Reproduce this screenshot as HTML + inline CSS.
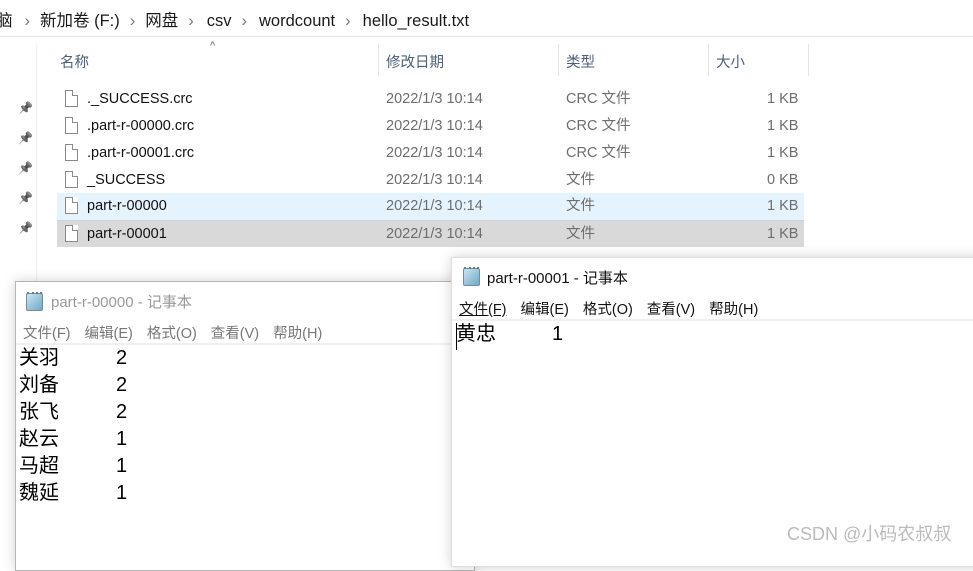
<!DOCTYPE html>
<html><head><meta charset="utf-8"><style>
*{margin:0;padding:0;box-sizing:border-box}
body{width:973px;height:550px;overflow:hidden;background:#fff;position:relative;font-family:"Liberation Sans","Noto Sans CJK SC",sans-serif;}
.a{position:absolute;white-space:nowrap}
.fi{position:absolute;width:13px;height:17px;border:1px solid #8a8a8a;background:#fff}
.fi:after{content:"";position:absolute;right:-1px;top:-1px;width:5px;height:5px;background:#fff;border-left:1px solid #8a8a8a;border-bottom:1px solid #8a8a8a}
.row{position:absolute;left:57px;width:747px;height:27px;font-size:14.5px;color:#111}
.row span{position:absolute;top:5px;line-height:17px;height:17px}
.g{color:#6d6d6d}
.pin{position:absolute;left:18px;width:10px;height:10px;color:#7a8590;font-size:12px;filter:grayscale(1)}
.np{position:absolute;background:#fff;border:1px solid #b5b5b5;box-shadow:0 0 12px rgba(0,0,0,.18)}
.ico{position:absolute;width:17px;height:18px;background:linear-gradient(135deg,#c8e6f2,#6fa9c4);border:1px solid #6a8ea2;border-radius:2px}
.ico:before{content:"";position:absolute;left:0;right:0;top:-2px;height:3px;border-top:2px dotted #777}
.menu span{margin-right:14px}
.txt{font-size:20px;color:#000;line-height:27px}
.s{color:#777;margin:0 10px}
</style></head><body>
<div class="a" style="left:-4px;top:7px;font-size:16.5px;color:#1a1a1a">脑<span class="s" style="margin-left:12px">›</span>新加卷 (F:)<span class="s">›</span>网盘<span class="s" style="margin-right:13px">›</span>csv<span class="s" style="margin-right:12px">›</span>wordcount<span class="s" style="margin-right:12px">›</span>hello_result.txt</div>
<div class="a" style="left:0;top:36px;width:973px;height:1px;background:#e5e5e5"></div>
<div class="a" style="left:36px;top:44px;width:1px;height:240px;background:#f0f0f0"></div>
<div class="a" style="left:210px;top:40px;font-size:11px;color:#666">^</div>
<div class="a" style="left:60px;top:51px;font-size:14.5px;color:#4c607a">名称</div>
<div class="a" style="left:378px;top:44px;width:1px;height:32px;background:#e5e5e5"></div>
<div class="a" style="left:386px;top:51px;font-size:14.5px;color:#4c607a">修改日期</div>
<div class="a" style="left:558px;top:44px;width:1px;height:32px;background:#e5e5e5"></div>
<div class="a" style="left:566px;top:51px;font-size:14.5px;color:#4c607a">类型</div>
<div class="a" style="left:708px;top:44px;width:1px;height:32px;background:#e5e5e5"></div>
<div class="a" style="left:716px;top:51px;font-size:14.5px;color:#4c607a">大小</div>
<div class="a" style="left:808px;top:44px;width:1px;height:32px;background:#e5e5e5"></div>
<div class="pin" style="top:101px">📌</div>
<div class="pin" style="top:131px">📌</div>
<div class="pin" style="top:161px">📌</div>
<div class="pin" style="top:191px">📌</div>
<div class="pin" style="top:221px">📌</div>
<div class="row" style="top:86px"><div class="fi" style="left:8px;top:4px"></div><span style="left:30px">._SUCCESS.crc</span><span class="g" style="left:329px">2022/1/3 10:14</span><span class="g" style="left:509px">CRC 文件</span><span class="g" style="left:710px">1 KB</span></div>
<div class="row" style="top:113px"><div class="fi" style="left:8px;top:4px"></div><span style="left:30px">.part-r-00000.crc</span><span class="g" style="left:329px">2022/1/3 10:14</span><span class="g" style="left:509px">CRC 文件</span><span class="g" style="left:710px">1 KB</span></div>
<div class="row" style="top:140px"><div class="fi" style="left:8px;top:4px"></div><span style="left:30px">.part-r-00001.crc</span><span class="g" style="left:329px">2022/1/3 10:14</span><span class="g" style="left:509px">CRC 文件</span><span class="g" style="left:710px">1 KB</span></div>
<div class="row" style="top:167px"><div class="fi" style="left:8px;top:4px"></div><span style="left:30px">_SUCCESS</span><span class="g" style="left:329px">2022/1/3 10:14</span><span class="g" style="left:509px">文件</span><span class="g" style="left:710px">0 KB</span></div>
<div class="row" style="top:193px;background:#e5f3ff"><div class="fi" style="left:8px;top:4px"></div><span style="left:30px">part-r-00000</span><span class="g" style="left:329px">2022/1/3 10:14</span><span class="g" style="left:509px">文件</span><span class="g" style="left:710px">1 KB</span></div>
<div class="row" style="top:220px;background:#d9d9d9;border-top:1px solid #c8d3dc"><div class="fi" style="left:8px;top:4px"></div><span style="left:30px">part-r-00001</span><span class="g" style="left:329px">2022/1/3 10:14</span><span class="g" style="left:509px">文件</span><span class="g" style="left:710px">1 KB</span></div>
<div class="np" style="left:15px;top:281px;width:460px;height:290px">
 <div class="ico" style="left:10px;top:11px"></div>
 <div class="a" style="left:35px;top:9px;font-size:15px;color:#999">part-r-00000 - 记事本</div>
 <div class="a menu" style="left:7px;top:40px;font-size:14.5px;color:#777"><span>文件(F)</span><span>编辑(E)</span><span>格式(O)</span><span>查看(V)</span><span>帮助(H)</span></div>
 <div class="a" style="left:0;top:61px;width:460px;height:2px;background:#f0f0f0"></div>
 <div class="a txt" style="left:3px;top:63px">关羽<br>刘备<br>张飞<br>赵云<br>马超<br>魏延</div>
 <div class="a txt" style="left:100px;top:63px">2<br>2<br>2<br>1<br>1<br>1</div>
</div>
<div class="np" style="left:451px;top:257px;width:540px;height:310px;border-color:#ddd">
 <div class="ico" style="left:11px;top:10px"></div>
 <div class="a" style="left:35px;top:9px;font-size:15px;color:#111">part-r-00001 - 记事本</div>
 <div class="a menu" style="left:7px;top:40px;font-size:14.5px;color:#111"><span style="text-decoration:underline">文件(F)</span><span>编辑(E)</span><span>格式(O)</span><span>查看(V)</span><span>帮助(H)</span></div>
 <div class="a" style="left:0;top:61px;width:540px;height:2px;background:#f0f0f0"></div>
 <div class="a" style="left:4px;top:65px;width:1px;height:27px;background:#000"></div>
 <div class="a txt" style="left:4px;top:63px">黄忠</div>
 <div class="a txt" style="left:100px;top:63px">1</div>
 <div class="a" style="left:335px;top:262px;font-size:18px;color:#bbb">CSDN @小码农叔叔</div>
</div>
</body></html>
